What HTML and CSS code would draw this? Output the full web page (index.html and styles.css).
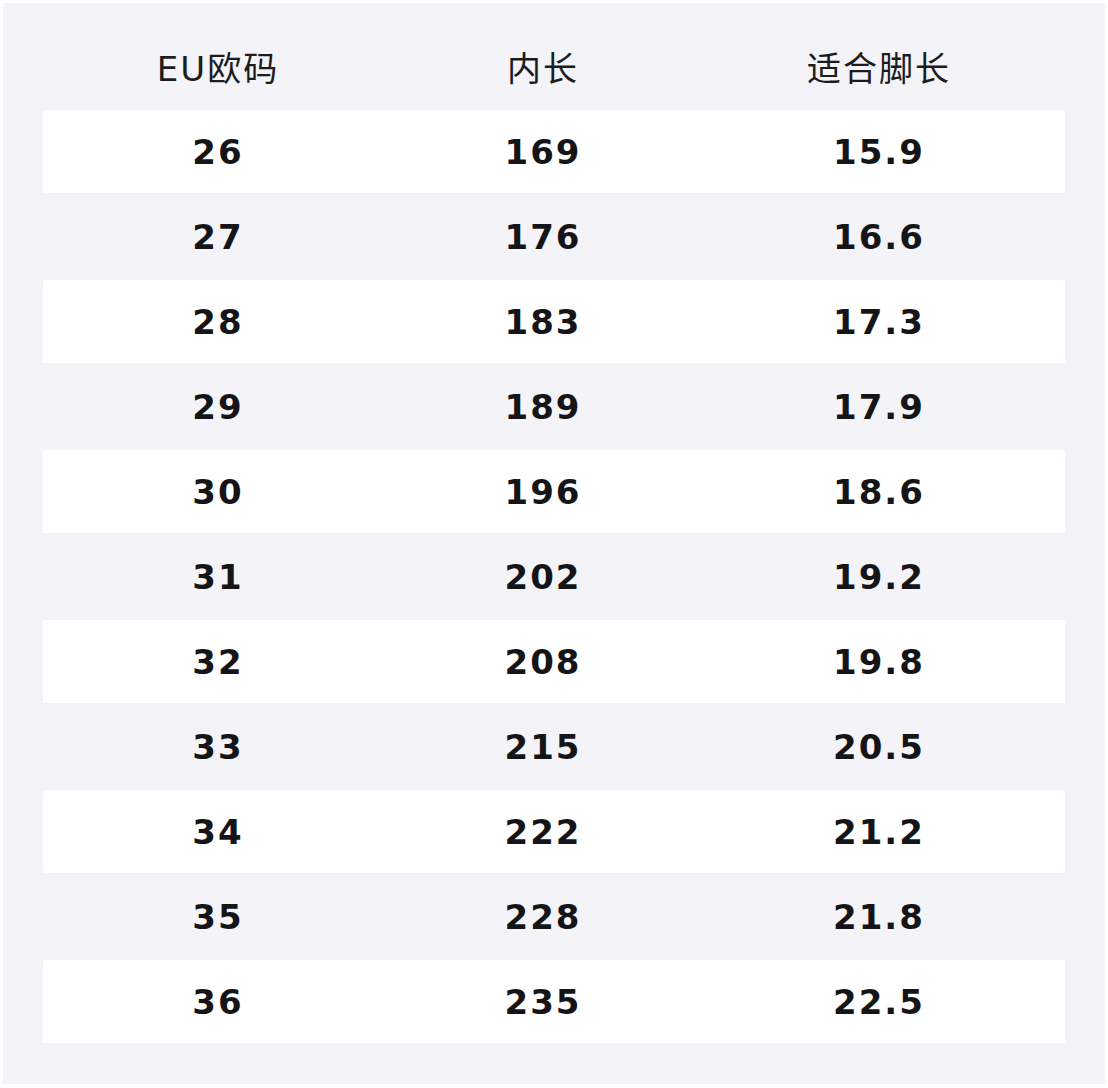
FILE: index.html
```html
<!DOCTYPE html>
<html lang="zh">
<head>
<meta charset="utf-8">
<title>尺码表</title>
<link rel="stylesheet" href="styles.css">
</head>
<body>
<div class="panel">
  <div class="row head"><div>EU欧码</div><div>内长</div><div>适合脚长</div></div>
  <div class="row odd"><div>26</div><div>169</div><div>15.9</div></div>
  <div class="row"><div>27</div><div>176</div><div>16.6</div></div>
  <div class="row odd"><div>28</div><div>183</div><div>17.3</div></div>
  <div class="row"><div>29</div><div>189</div><div>17.9</div></div>
  <div class="row odd"><div>30</div><div>196</div><div>18.6</div></div>
  <div class="row"><div>31</div><div>202</div><div>19.2</div></div>
  <div class="row odd"><div>32</div><div>208</div><div>19.8</div></div>
  <div class="row"><div>33</div><div>215</div><div>20.5</div></div>
  <div class="row odd"><div>34</div><div>222</div><div>21.2</div></div>
  <div class="row"><div>35</div><div>228</div><div>21.8</div></div>
  <div class="row odd"><div>36</div><div>235</div><div>22.5</div></div>
</div>
</body>
</html>
```
FILE: styles.css
```css
html, body {
  margin: 0;
  padding: 0;
  background: #ffffff;
}
body {
  padding: 3px;
  font-family: "DejaVu Sans", "Noto Sans CJK SC", sans-serif;
  color: #151517;
}
.panel {
  width: 1102px;
  height: 1081px;
  box-sizing: border-box;
  background: #f3f3f8;
  padding: 22px 40px 40px 40px;
}
.row {
  display: grid;
  grid-template-columns: 350px 300px 372px;
  height: 83px;
  border-bottom: 2px solid #f3f3f8;
  align-items: center;
  text-align: center;
  font-size: 34px;
  font-weight: bold;
  letter-spacing: 2px;
  border-radius: 2px;
}
.row.head {
  font-weight: normal;
  color: #1c1c1e;
  letter-spacing: 2px;
}
.row.odd {
  background: #ffffff;
}
```
